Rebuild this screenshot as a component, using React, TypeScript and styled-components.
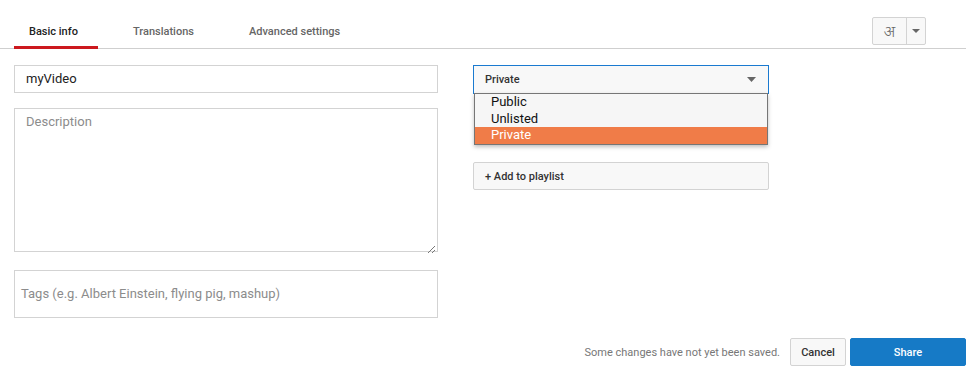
import React from "react";
import styled, { createGlobalStyle } from "styled-components";

const Global = createGlobalStyle`
  html, body { margin: 0; padding: 0; background: #fff; }
  body { font-family: Roboto, "Noto Sans", Arial, sans-serif; }
  * { box-sizing: border-box; }
`;

const Page = styled.div`
  width: 977px;
  height: 380px;
  padding-right: 11px;
  display: flex;
  flex-direction: column;
`;

const TabBar = styled.div`
  height: 49px;
  border-bottom: 1px solid #cfcfcf;
  display: flex;
  align-items: stretch;
  padding-left: 14px;
  padding-right: 40px;
`;

const Tabs = styled.div`
  display: flex;
  gap: 20px;
  flex: 1;
`;

const Tab = styled.div<{ $active?: boolean; $w?: number }>`
  position: relative;
  min-width: ${(p) => p.$w ?? 0}px;
  padding: 0 15px;
  display: flex;
  align-items: flex-end;
  padding-bottom: 8px;
  font-size: 11px;
  font-weight: 500;
  color: ${(p) => (p.$active ? "#222" : "#666")};
  border-bottom: 3px solid ${(p) => (p.$active ? "#cc181e" : "transparent")};
  margin-bottom: -1px;
`;

const LangButton = styled.div`
  align-self: flex-start;
  margin-top: 17px;
  height: 28px;
  width: 54px;
  display: flex;
  border: 1px solid #d3d3d3;
  border-radius: 2px;
  background: #f8f8f8;
`;

const LangGlyph = styled.div`
  width: 34px;
  display: flex;
  align-items: center;
  justify-content: center;
  font-family: "Noto Sans", "DejaVu Sans", sans-serif;
  font-size: 16px;
  font-weight: 300;
  color: #666;
  border-right: 1px solid #d3d3d3;
`;

const LangArrow = styled.div`
  flex: 1;
  display: flex;
  align-items: center;
  justify-content: center;
`;

const Content = styled.div`
  display: flex;
  gap: 35px;
  padding: 16px 0 0 14px;
`;

const LeftCol = styled.div`
  width: 424px;
  display: flex;
  flex-direction: column;
`;

const RightCol = styled.div`
  width: 296px;
  display: flex;
  flex-direction: column;
`;

const Field = styled.div<{ $h: number; $mt?: number; $padLeft?: number; $center?: boolean }>`
  position: relative;
  height: ${(p) => p.$h}px;
  margin-top: ${(p) => p.$mt ?? 0}px;
  border: 1px solid #d3d3d3;
  background: #fff;
  padding-left: ${(p) => p.$padLeft ?? 10}px;
  padding-top: ${(p) => (p.$center ? 0 : 5)}px;
  padding-bottom: ${(p) => (p.$center ? 2 : 0)}px;
  display: flex;
  align-items: ${(p) => (p.$center ? "center" : "flex-start")};
  font-size: 13px;
`;

const Value = styled.span`
  color: #222;
`;

const Placeholder = styled.span`
  color: #8c8c8c;
`;

const Resize = styled.div`
  position: absolute;
  right: 2px;
  bottom: 2px;
  width: 8px;
  height: 8px;
`;

const SelectWrap = styled.div`
  position: relative;
`;

const Select = styled.div`
  height: 29px;
  border: 1px solid #1a7ad0;
  background: #f8f8f8;
  display: flex;
  align-items: center;
  justify-content: space-between;
  padding: 0 12px 0 11px;
  font-size: 11px;
  font-weight: 500;
  color: #333;
`;

const Menu = styled.div`
  position: absolute;
  top: 28px;
  left: 1px;
  width: 294px;
  background: #f6f6f6;
  border: 1px solid #767676;
  box-shadow: 0 2px 4px rgba(0, 0, 0, 0.25);
  z-index: 2;
  display: flex;
  flex-direction: column;
`;

const MenuItem = styled.div<{ $selected?: boolean }>`
  height: 16.6px;
  line-height: 16px;
  padding-left: 16px;
  font-size: 13px;
  color: ${(p) => (p.$selected ? "#fff" : "#111")};
  background: ${(p) => (p.$selected ? "#f07c48" : "transparent")};
`;

const Button = styled.div<{ $primary?: boolean; $w?: number }>`
  height: 28px;
  width: ${(p) => (p.$w ? `${p.$w}px` : "auto")};
  display: flex;
  align-items: center;
  justify-content: ${(p) => (p.$w ? "center" : "flex-start")};
  padding: 0 ${(p) => (p.$w ? 0 : 11)}px;
  font-size: 11px;
  font-weight: 500;
  border-radius: 2px;
  border: 1px solid ${(p) => (p.$primary ? "#167ac6" : "#d3d3d3")};
  background: ${(p) => (p.$primary ? "#167ac6" : "#f8f8f8")};
  color: ${(p) => (p.$primary ? "#fff" : "#333")};
`;

const PlaylistButton = styled(Button)`
  margin-top: 68px;
`;

const Footer = styled.div`
  display: flex;
  justify-content: flex-end;
  align-items: center;
  margin-top: 20px;
  gap: 4px;
`;

const Status = styled.span`
  font-size: 11px;
  color: #777;
  margin-right: 6px;
`;

export default function App() {
  return (
    <>
      <Global />
      <Page>
        <TabBar>
          <Tabs>
            <Tab $active $w={84}>Basic info</Tab>
            <Tab $w={96}>Translations</Tab>
            <Tab>Advanced settings</Tab>
          </Tabs>
          <LangButton>
            <LangGlyph>अ</LangGlyph>
            <LangArrow>
              <svg width="8" height="4" viewBox="0 0 8 4">
                <path d="M0 0 L8 0 L4 4 Z" fill="#666" />
              </svg>
            </LangArrow>
          </LangButton>
        </TabBar>
        <Content>
          <LeftCol>
            <Field $h={28} $center $padLeft={11}>
              <Value>myVideo</Value>
            </Field>
            <Field $h={144} $mt={15} $padLeft={11}>
              <Placeholder>Description</Placeholder>
              <Resize>
                <svg width="8" height="8" viewBox="0 0 8 8">
                  <path d="M8 1 L1 8 M8 5 L5 8" stroke="#777" strokeWidth="1" />
                </svg>
              </Resize>
            </Field>
            <Field $h={48} $mt={18} $center $padLeft={6}>
              <Placeholder>Tags (e.g. Albert Einstein, flying pig, mashup)</Placeholder>
            </Field>
          </LeftCol>
          <RightCol>
            <SelectWrap>
              <Select>
                <span>Private</span>
                <svg width="9" height="5" viewBox="0 0 9 5">
                  <path d="M0 0 L9 0 L4.5 5 Z" fill="#666" />
                </svg>
              </Select>
              <Menu>
                <MenuItem>Public</MenuItem>
                <MenuItem>Unlisted</MenuItem>
                <MenuItem $selected>Private</MenuItem>
              </Menu>
            </SelectWrap>
            <PlaylistButton>+ Add to playlist</PlaylistButton>
          </RightCol>
        </Content>
        <Footer>
          <Status>Some changes have not yet been saved.</Status>
          <Button $w={56}>Cancel</Button>
          <Button $primary $w={116}>Share</Button>
        </Footer>
      </Page>
    </>
  );
}
